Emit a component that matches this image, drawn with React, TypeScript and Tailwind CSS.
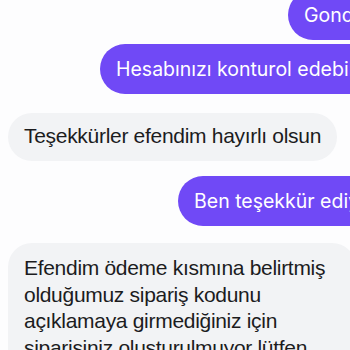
const purple = "rounded-full bg-[#7049f6] px-4 py-[11px] text-[19.5px] leading-[28px] text-white whitespace-nowrap font-['Inter',sans-serif] self-start";
const gray = "bg-[#f2f3f5] text-[#1c1c1e] font-['Liberation_Sans','Noto_Sans',sans-serif] text-[21px] tracking-[-0.3px] self-start ml-2";

export default function App() {
  return (
    <div className="h-[350px] w-[350px] overflow-hidden bg-[#fdfdfe]">
      <div className="flex flex-col">
        <div className={`${purple} -mt-[10px] ml-[288px]`}>Gonderildi</div>
        <div className={`${purple} mt-1 ml-[100px]`}>Hesabınızı konturol edebilir misiniz</div>
        <div className={`${gray} mt-[19px] rounded-[24px] px-4 pt-[11px] pb-[13px] leading-[24px]`}>
          Teşekkürler efendim hayırlı olsun
        </div>
        <div className={`${purple} mt-[15px] ml-[178px]`}>Ben teşekkür ediyorum</div>
        <div className={`${gray} mt-[17px] w-[348px] shrink-0 rounded-[24px] px-4 pt-3 pb-3 leading-[26.5px]`}>
          Efendim ödeme kısmına belirtmiş olduğumuz sipariş kodunu açıklamaya girmediğiniz için siparişiniz oluşturulmuyor lütfen tekrar deneyiniz
        </div>
      </div>
    </div>
  );
}
